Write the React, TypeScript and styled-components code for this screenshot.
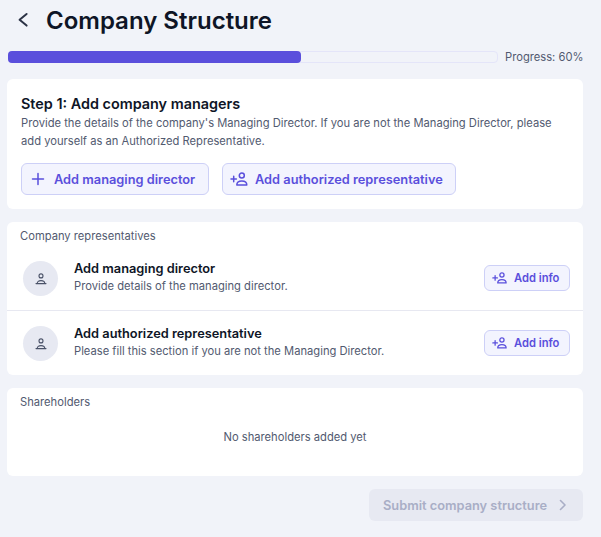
import React, { FC } from "react";
import styled, { createGlobalStyle } from "styled-components";

const GlobalStyle = createGlobalStyle`
  html, body {
    margin: 0;
    padding: 0;
    background: #f1f3f9;
  }
  body {
    font-family: Inter, "Liberation Sans", sans-serif;
    color: #0e1526;
    overflow: hidden;
  }
  * {
    box-sizing: border-box;
  }
`;

const BackIcon: FC = () => (
  <svg width="16" height="16" viewBox="0 0 16 16" fill="none">
    <path d="M10.6 2 L3.6 7.8 L10.6 13.6" stroke="#2b3245" strokeWidth="2" strokeLinecap="round" strokeLinejoin="round" />
  </svg>
);

const PlusIcon: FC = () => (
  <svg width="14" height="14" viewBox="0 0 14 14" fill="none">
    <path d="M7 1.5 V12.5 M1.5 7 H12.5" stroke="#5a4fdc" strokeWidth="1.5" strokeLinecap="round" />
  </svg>
);

const AddPersonIcon: FC<{ size?: number }> = ({ size = 19 }) => (
  <svg width={size} height={(size * 14) / 19} viewBox="0 0 19 14" fill="none">
    <path d="M1 7 H6.4 M3.7 4.3 V9.7" stroke="#5a4fdc" strokeWidth="1.5" strokeLinecap="round" />
    <circle cx="11.8" cy="3.6" r="2.5" stroke="#5a4fdc" strokeWidth="1.5" />
    <path d="M6.8 13 C6.8 10.6 8.8 9 11.8 9 C14.8 9 16.8 10.6 16.8 13 Z" stroke="#5a4fdc" strokeWidth="1.5" strokeLinejoin="round" />
  </svg>
);

const PersonIcon: FC = () => (
  <svg width="12" height="12" viewBox="0 0 12 12" fill="none">
    <circle cx="6" cy="2.9" r="2" stroke="#4a5268" strokeWidth="1.1" />
    <path d="M1 10.6 H11 M2.2 10.6 C2.2 8.6 3.6 7.6 6 7.6 C8.4 7.6 9.8 8.6 9.8 10.6" stroke="#4a5268" strokeWidth="1.1" strokeLinecap="round" />
  </svg>
);

const ChevronIcon: FC = () => (
  <svg width="10" height="12" viewBox="0 0 10 12" fill="none">
    <path d="M2.5 1.5 L7 6 L2.5 10.5" stroke="#a9aec6" strokeWidth="1.6" strokeLinecap="round" strokeLinejoin="round" />
  </svg>
);

const representatives = [
  {
    title: "Add managing director",
    text: "Provide details of the managing director.",
  },
  {
    title: "Add authorized representative",
    text: "Please fill this section if you are not the Managing Director.",
  },
];

export default function App() {
  return (
    <>
      <GlobalStyle />
      <Page>
        <Header>
          <BackButton>
            <BackIcon />
          </BackButton>
          <Title>Company Structure</Title>
        </Header>
        <ProgressRow>
          <ProgressTrack>
            <ProgressFill $percent={60} />
          </ProgressTrack>
          <ProgressLabel>Progress: 60%</ProgressLabel>
        </ProgressRow>
        <StepCard>
          <StepTitle>Step 1: Add company managers</StepTitle>
          <StepText>
            Provide the details of the company's Managing Director. If you are
            not the Managing Director, please add yourself as an Authorized
            Representative.
          </StepText>
          <StepActions>
            <ActionButton $width={188} $pad={9} $gap={9}>
              <PlusIcon />
              Add managing director
            </ActionButton>
            <ActionButton $width={234} $pad={7} $gap={6}>
              <AddPersonIcon />
              Add authorized representative
            </ActionButton>
          </StepActions>
        </StepCard>
        <ListCard>
          <SectionLabel>Company representatives</SectionLabel>
          {representatives.map((item) => (
            <RepRow key={item.title}>
              <Avatar>
                <PersonIcon />
              </Avatar>
              <RepBody>
                <RepTitle>{item.title}</RepTitle>
                <RepText>{item.text}</RepText>
              </RepBody>
              <InfoButton>
                <AddPersonIcon size={16} />
                Add info
              </InfoButton>
            </RepRow>
          ))}
        </ListCard>
        <ShareholdersCard>
          <SectionLabel>Shareholders</SectionLabel>
          <EmptyText>No shareholders added yet</EmptyText>
        </ShareholdersCard>
        <Footer>
          <SubmitButton disabled>
            Submit company structure
            <ChevronIcon />
          </SubmitButton>
        </Footer>
      </Page>
    </>
  );
}

const Page = styled.div`
  width: 601px;
  height: 537px;
  padding: 0 18px 0 7px;
  display: flex;
  flex-direction: column;
`;

const Header = styled.div`
  height: 40px;
  display: flex;
  align-items: center;
  padding-left: 9px;
  gap: 14px;
`;

const BackButton = styled.div`
  width: 16px;
  height: 16px;
  display: flex;
`;

const Title = styled.h1`
  margin: 0;
  font-size: 24px;
  font-weight: 600;
  color: #0e1526;
`;

const ProgressRow = styled.div`
  margin-top: 11px;
  height: 12px;
  display: flex;
  align-items: center;
  padding-left: 1px;
  gap: 7px;
`;

const ProgressTrack = styled.div`
  width: 490px;
  height: 12px;
  flex-shrink: 0;
  border: 1px solid #e4e5f9;
  border-radius: 4px;
  background: #f1f3f9;
`;

const ProgressFill = styled.div<{ $percent: number }>`
  width: ${(p) => p.$percent}%;
  height: 12px;
  margin: -1px;
  border-radius: 4px;
  background: #5a4fdc;
`;

const ProgressLabel = styled.span`
  font-size: 11.2px;
  color: #525a70;
  white-space: nowrap;
`;

const Card = styled.section`
  background: #ffffff;
  border-radius: 6px;
  width: 576px;
`;

const StepCard = styled(Card)`
  margin-top: 16px;
  height: 130px;
  padding: 16px 14px 0;
`;

const StepTitle = styled.h2`
  margin: 0;
  font-size: 14.4px;
  line-height: 18px;
  font-weight: 600;
  color: #0e1526;
`;

const StepText = styled.p`
  margin: 1px 0 0;
  font-size: 11.2px;
  line-height: 18px;
  color: #525a70;
`;

const StepActions = styled.div`
  margin-top: 13px;
  display: flex;
  gap: 13px;
`;

const ActionButton = styled.button<{ $width: number; $pad: number; $gap: number }>`
  width: ${(p) => p.$width}px;
  height: 32px;
  padding: 0 0 0 ${(p) => p.$pad}px;
  display: flex;
  align-items: center;
  gap: ${(p) => p.$gap}px;
  border: 1px solid #cdd0f7;
  border-radius: 6px;
  background: #f3f4fe;
  color: #5a4fdc;
  font-family: inherit;
  font-size: 12.8px;
  font-weight: 600;
  white-space: nowrap;
`;

const ListCard = styled(Card)`
  margin-top: 13px;
  height: 153px;
`;

const SectionLabel = styled.div`
  padding: 7px 13px 3px;
  font-size: 11.2px;
  line-height: 14px;
  color: #525a70;
`;

const RepRow = styled.div`
  height: 64px;
  display: flex;
  align-items: center;
  padding: 0 13px 0 16px;

  & + & {
    height: 65px;
    border-top: 1px solid #e7e8f1;
  }
`;

const Avatar = styled.div`
  width: 35px;
  height: 35px;
  margin-top: 1px;
  border-radius: 50%;
  background: #e7e9f2;
  display: flex;
  align-items: center;
  justify-content: center;
  flex-shrink: 0;
`;

const RepBody = styled.div`
  flex: 1;
  margin-left: 16px;
  padding-bottom: 2px;
`;

const RepTitle = styled.div`
  font-size: 12.8px;
  line-height: 18px;
  font-weight: 600;
  color: #0e1526;
`;

const RepText = styled.div`
  font-size: 11.2px;
  line-height: 16px;
  color: #525a70;
`;

const InfoButton = styled.button`
  width: 86px;
  height: 26px;
  padding: 0 0 0 7px;
  display: flex;
  align-items: center;
  gap: 6px;
  border: 1px solid #cdd0f7;
  border-radius: 6px;
  background: #f3f4fe;
  color: #5a4fdc;
  font-family: inherit;
  font-size: 11.2px;
  font-weight: 600;
  white-space: nowrap;
`;

const ShareholdersCard = styled(Card)`
  margin-top: 13px;
  height: 88px;
`;

const EmptyText = styled.div`
  margin-top: 18px;
  text-align: center;
  font-size: 11.2px;
  line-height: 14px;
  color: #525a70;
`;

const Footer = styled.div`
  margin-top: 13px;
  width: 576px;
  display: flex;
  justify-content: flex-end;
`;

const SubmitButton = styled.button`
  width: 214px;
  height: 32px;
  padding: 0 0 0 14px;
  display: flex;
  align-items: center;
  gap: 11px;
  border: none;
  border-radius: 6px;
  background: #e7e9f2;
  color: #a9aec6;
  font-family: inherit;
  font-size: 12.8px;
  font-weight: 600;
  white-space: nowrap;
`;
